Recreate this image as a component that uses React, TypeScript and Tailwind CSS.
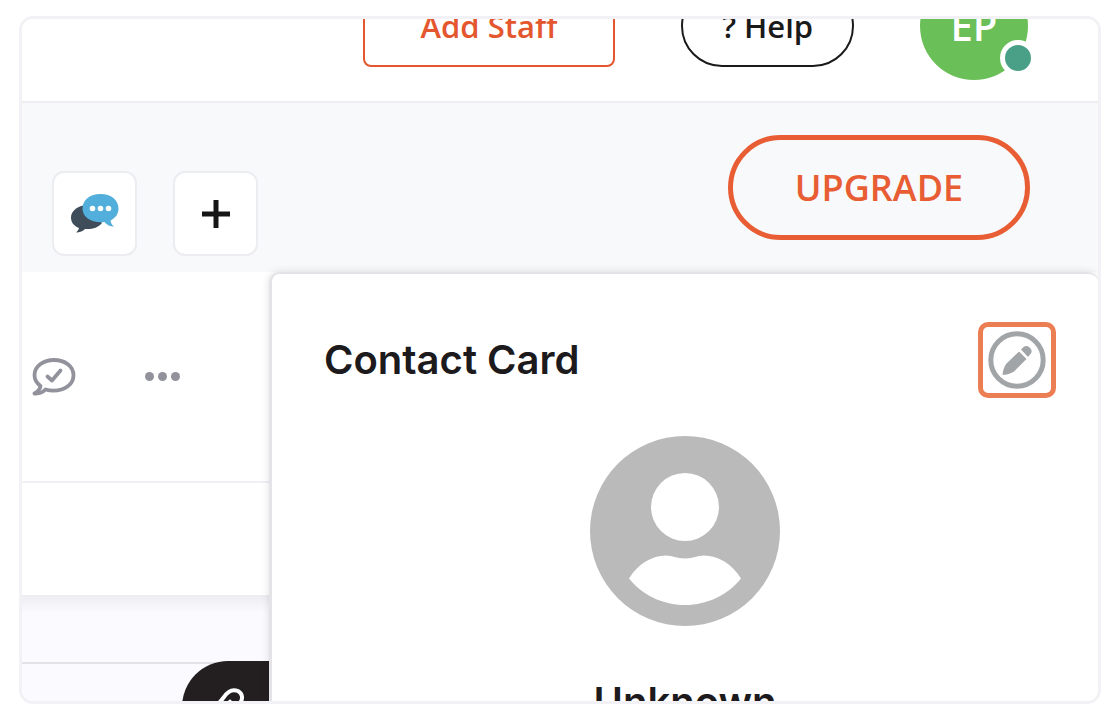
import React from 'react';

const ChatIcon = () => (
  <svg viewBox="0 0 48 40" className="w-12 h-10" aria-hidden="true">
    <path
      d="M17 11C7 11 0 17 0 23.500c0 5 3 8.500 8 10.500-.5 2-1.500 3-3 4.500 4 0 7-1.500 9-3.500 7 .5 13-1 17-6z"
      fill="#3f4d5a"
    />
    <path
      d="M29.500 0C40 0 47.500 6 47.500 14.500c0 5.500-3 9.500-8 12 .5 3 1.500 4.500 3.500 6-4.500 0-7.500-2-9.500-4.500C21.500 29.500 11.500 24 11.500 14.500 11.500 6 19 0 29.500 0z"
      fill="#52aeda"
    />
    <circle cx="21.500" cy="14.500" r="2.800" fill="#fff" />
    <circle cx="29.500" cy="14.500" r="2.800" fill="#fff" />
    <circle cx="37.500" cy="14.500" r="2.800" fill="#fff" />
  </svg>
);

const PlusIcon = () => (
  <svg viewBox="0 0 28 28" className="w-7 h-7" aria-hidden="true">
    <path d="M14 0v28M0 14h28" stroke="#161616" strokeWidth="5" />
  </svg>
);

const ReplyCheckIcon = () => (
  <svg
    viewBox="0 0 44 38"
    className="w-11 h-10"
    fill="none"
    stroke="#92929d"
    strokeWidth="3.800"
    strokeLinecap="round"
    strokeLinejoin="round"
    aria-hidden="true"
  >
    <path d="M22 2C11 2 2.500 8.500 2.500 17c0 4.500 2 8 6 11-.5 3.500-2.500 5.500-6 7.500 5 .5 8.500-1.500 11-4 2.500.800 5 1.200 8 1.200 11.500 0 20-6.500 20-15.500S33 2 22 2z" />
    <path d="M15.500 18.500l4.500 4 8.500-10" />
  </svg>
);

const PencilIcon = () => (
  <svg viewBox="0 0 58 58" className="w-[58px] h-[58px] shrink-0" aria-hidden="true">
    <circle cx="29" cy="29" r="26.200" fill="none" stroke="#a2a5a7" strokeWidth="5" />
    <path d="M31 20.500l7.500 7.500-12.500 12.500c-3.500 2.500-7.500 3.300-11.500 3.300.3-4 1.500-8 4-11.300z" fill="#a2a5a7" />
    <path d="M33 18.500l2.500-2.500c1.500-1.500 4-1.500 5.500 0l1.500 1.500c1.500 1.500 1.500 4 0 5.500L40 26z" fill="#a2a5a7" />
  </svg>
);

const PersonIcon = () => (
  <svg viewBox="0 0 190 190" className="w-[190px] h-[190px]" aria-hidden="true">
    <circle cx="95" cy="95" r="95" fill="#bababa" />
    <circle cx="95" cy="71" r="34" fill="#fff" />
    <path d="M39 142.500C48 128 62 119.500 76 119.500c7 0 10 3 19 3s12-3 19-3c14 0 28 8.500 37 23-13 16-33 26.500-56 26.500s-43-10.500-56-26.500z" fill="#fff" />
  </svg>
);

const Header = () => (
  <header className="h-[84px] shrink-0 flex items-end justify-end pr-[70px] pb-[21px] border-b-2 border-[#efeff3] bg-white">
    <div className="flex items-center gap-[66px] shrink-0">
      <button className="w-[252px] h-[82px] rounded-lg border-2 border-[#e4572e] text-[#e4572e] text-[31px] font-semibold">
        Add Staff
      </button>
      <button className="w-[173px] h-[82px] rounded-full border-2 border-[#1a1a1a] text-[#1a1a1a] text-[31px] font-semibold">
        ? Help
      </button>
      <div className="relative w-[108px] h-[108px] rounded-full bg-[#6bbf59] text-white text-[40px] font-semibold flex items-center justify-center">
        EP
        <span className="absolute -right-2 bottom-1 w-9 h-9 rounded-full border-5 border-white bg-[#4a9f87]" />
      </div>
    </div>
  </header>
);

const Toolbar = () => (
  <div className="h-[169px] shrink-0 flex items-center justify-between pl-[30px] pr-[68px] bg-[#f7f9fb]">
    <div className="flex gap-9 self-end pb-4">
      <button aria-label="Chats" className="w-[85px] h-[85px] rounded-xl border-2 border-[#ececf1] bg-white flex items-center justify-center">
        <ChatIcon />
      </button>
      <button aria-label="Add" className="w-[85px] h-[85px] rounded-xl border-2 border-[#ececf1] bg-white flex items-center justify-center">
        <PlusIcon />
      </button>
    </div>
    <button className="w-[302px] h-[105px] rounded-full border-5 border-[#e85d33] text-[#e85d33] text-4xl font-semibold">
      UPGRADE
    </button>
  </div>
);

const Conversation = () => (
  <section className="w-[248px] shrink-0 flex flex-col">
    <div className="h-[211px] shrink-0 flex items-center gap-[69px] pl-[10px] border-b-2 border-[#efeff5] bg-white">
      <button aria-label="Mark as resolved">
        <ReplyCheckIcon />
      </button>
      <button aria-label="More" className="flex gap-1">
        <span className="w-[9px] h-[9px] rounded-full bg-[#92929d]" />
        <span className="w-[9px] h-[9px] rounded-full bg-[#92929d]" />
        <span className="w-[9px] h-[9px] rounded-full bg-[#92929d]" />
      </button>
    </div>
    <div className="h-28 shrink-0 bg-white" />
    <div className="grow relative bg-[#fbfbff]">
      <div className="h-[18px] bg-linear-to-b from-[#ededf1] to-[#fbfbff]" />
      <div className="h-[51px] border-b-2 border-[#e4e4e8]" />
      <button aria-label="Write a note" className="absolute right-0 top-[66px] w-[88px] h-[88px] rounded-tl-[46px] bg-[#231f20]">
        <svg viewBox="0 0 88 88" className="w-[88px] h-[88px]" fill="none" stroke="#fff" strokeWidth="4" strokeLinecap="round" aria-hidden="true">
          <path d="M28 53l14-17c4-6 9-8 14-6 5 3 5 8 2 12L44 60" />
          <path d="M40 50l8-10" strokeWidth="3" />
        </svg>
      </button>
    </div>
  </section>
);

const ContactCard = () => (
  <aside className="grow relative -ml-px rounded-t-[10px] border-t-2 border-l-3 border-[#e3e3e8] bg-white shadow-[0_0_8px_rgba(0,0,0,0.12)]">
    <div className="flex items-center justify-between pt-12 pl-[52px] pr-[42px]">
      <h2 className="text-[#1c1a1c] text-[40px] leading-[76px] font-semibold font-[Inter,sans-serif]">Contact Card</h2>
      <button aria-label="Edit contact" className="w-[78px] h-[76px] rounded-[10px] border-5 border-[#ec7e54] flex items-center justify-center">
        <PencilIcon />
      </button>
    </div>
    <div className="flex flex-col items-center pt-[38px]">
      <PersonIcon />
      <p className="pt-[52px] text-[#1c1a1c] text-[40px] leading-[48px] font-semibold font-[Inter,sans-serif]">Unknown</p>
    </div>
  </aside>
);

const App = () => {
  return (
    <div className="min-h-screen bg-white pt-4 pb-4 pl-[19px] pr-[13px] font-['Open_Sans',sans-serif]">
      <main className="h-[calc(100vh-32px)] flex flex-col rounded-[14px] border-3 border-[#f2f1f6] overflow-hidden">
        <Header />
        <Toolbar />
        <div className="grow min-h-0 flex">
          <Conversation />
          <ContactCard />
        </div>
      </main>
    </div>
  );
};

export default App;
